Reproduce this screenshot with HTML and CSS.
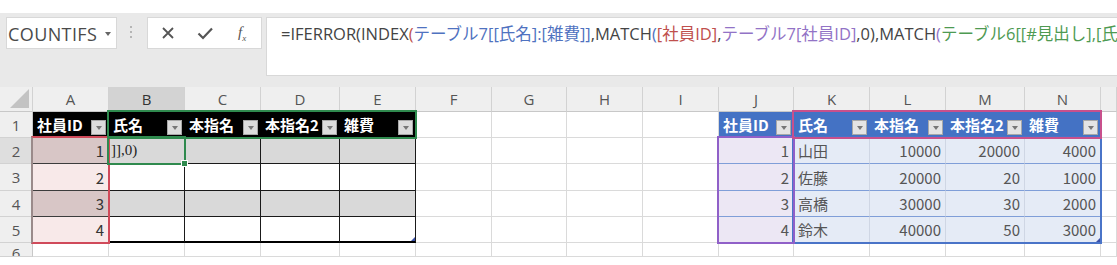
FILE: index.html
```html
<!DOCTYPE html>
<html lang="ja">
<head>
    <meta charset="utf-8">
    <title>テーブル参照</title>
    <link rel="stylesheet" href="styles.css">
</head>
<body>
    <div class="top"></div>
    <div class="toolbar">
        <div class="namebox">COUNTIFS<span class="dd"></span></div>
        <div class="dots"><i></i><i></i><i></i></div>
        <div class="btnbox">
            <svg width="14" height="14" viewBox="0 0 14 14"><path d="M2 2 L12 12 M12 2 L2 12" stroke="#555" stroke-width="1.8" fill="none"/></svg>
            <svg width="16" height="14" viewBox="0 0 16 14"><path d="M1.5 7.5 L6 12 L15 2.5" stroke="#555" stroke-width="2.2" fill="none"/></svg>
            <span class="fx">f<sub>x</sub></span>
        </div>
        <div class="formula">=IFERROR(INDEX<span class="p-red">(</span><span class="f-blue">テーブル7[[氏名]:[雑費]]</span>,MATCH<span class="p-blue">(</span><span class="f-red">[社員ID]</span>,<span class="f-purple">テーブル7[社員ID]</span>,0),MATCH<span class="p-purple">(</span><span class="f-green">テーブル6[[#見出し],[氏名]:[雑費]]</span>,0),"")</div>
    </div>

    <div class="sheet">
        <div class="grid">
            <!-- column headers -->
            <div class="corner"><span class="tri"></span></div>
            <div class="ch">A</div><div class="ch sel">B</div><div class="ch">C</div><div class="ch">D</div><div class="ch">E</div>
            <div class="ch">F</div><div class="ch">G</div><div class="ch">H</div><div class="ch">I</div>
            <div class="ch">J</div><div class="ch">K</div><div class="ch">L</div><div class="ch">M</div><div class="ch">N</div><div class="ch"></div>

            <!-- row 1 -->
            <div class="rh">1</div>
            <div class="c t1h"><span>社員ID</span><b class="fb"></b></div>
            <div class="c t1h"><span>氏名</span><b class="fb"></b></div>
            <div class="c t1h"><span>本指名</span><b class="fb"></b></div>
            <div class="c t1h"><span>本指名2</span><b class="fb"></b></div>
            <div class="c t1h"><span>雑費</span><b class="fb"></b></div>
            <div class="c"></div><div class="c"></div><div class="c"></div><div class="c"></div>
            <div class="c t2h"><span>社員ID</span><b class="fb"></b></div>
            <div class="c t2h"><span>氏名</span><b class="fb"></b></div>
            <div class="c t2h"><span>本指名</span><b class="fb"></b></div>
            <div class="c t2h"><span>本指名2</span><b class="fb"></b></div>
            <div class="c t2h"><span>雑費</span><b class="fb"></b></div>
            <div class="c"></div>

            <!-- row 2 -->
            <div class="rh sel">2</div>
            <div class="c t1a band num">1</div>
            <div class="c t1 band edit">]],0)</div>
            <div class="c t1 band"></div><div class="c t1 band"></div><div class="c t1 band"></div>
            <div class="c"></div><div class="c"></div><div class="c"></div><div class="c"></div>
            <div class="c t2j num">1</div>
            <div class="c t2">山田</div>
            <div class="c t2 num">10000</div><div class="c t2 num">20000</div><div class="c t2 num">4000</div>
            <div class="c"></div>

            <!-- row 3 -->
            <div class="rh">3</div>
            <div class="c t1a num">2</div>
            <div class="c t1"></div><div class="c t1"></div><div class="c t1"></div><div class="c t1"></div>
            <div class="c"></div><div class="c"></div><div class="c"></div><div class="c"></div>
            <div class="c t2j num">2</div>
            <div class="c t2">佐藤</div>
            <div class="c t2 num">20000</div><div class="c t2 num">20</div><div class="c t2 num">1000</div>
            <div class="c"></div>

            <!-- row 4 -->
            <div class="rh">4</div>
            <div class="c t1a band num">3</div>
            <div class="c t1 band"></div><div class="c t1 band"></div><div class="c t1 band"></div><div class="c t1 band"></div>
            <div class="c"></div><div class="c"></div><div class="c"></div><div class="c"></div>
            <div class="c t2j num">3</div>
            <div class="c t2">高橋</div>
            <div class="c t2 num">30000</div><div class="c t2 num">30</div><div class="c t2 num">2000</div>
            <div class="c"></div>

            <!-- row 5 -->
            <div class="rh">5</div>
            <div class="c t1a num">4</div>
            <div class="c t1 last"></div><div class="c t1 last"></div><div class="c t1 last"></div><div class="c t1 last end1"></div>
            <div class="c"></div><div class="c"></div><div class="c"></div><div class="c"></div>
            <div class="c t2j num">4</div>
            <div class="c t2">鈴木</div>
            <div class="c t2 num">40000</div><div class="c t2 num">50</div><div class="c t2 num end2">3000</div>
            <div class="c"></div>

            <!-- row 6 -->
            <div class="rh cut">6</div>
            <div class="c"></div><div class="c"></div><div class="c"></div><div class="c"></div><div class="c"></div>
            <div class="c"></div><div class="c"></div><div class="c"></div><div class="c"></div>
            <div class="c"></div><div class="c"></div><div class="c"></div><div class="c"></div><div class="c"></div>
            <div class="c"></div>
        </div>

        <!-- range highlights drawn over the grid -->
        <div class="rng red-a"></div>
        <div class="rng green-hd"></div>
        <div class="rng active"><span class="handle"></span></div>
        <div class="rng blue-body"></div>
        <div class="rng purple-id"></div>
        <div class="rng pink-hd"></div>
    </div>
</body>
</html>
```

FILE: styles.css
```css
body {
    margin: 0;
    background: #fff;
    font-family: "Noto Sans CJK JP", "Noto Sans", sans-serif;
    overflow: hidden;
}

.top {
    height: 13px;
}

/* formula bar */
.toolbar {
    height: 74px;
    background: #e9e9e9;
    display: flex;
    align-items: flex-start;
    padding: 4px 0 0 6px;
    box-sizing: border-box;
}

.namebox {
    width: 111px;
    height: 32px;
    background: #fff;
    border: 1px solid #d8d8d8;
    box-sizing: border-box;
    display: flex;
    align-items: center;
    padding: 1px 0 0 1px;
    font-family: "Open Sans", "Noto Sans", sans-serif;
    font-size: 18px;
    letter-spacing: 0.4px;
    color: #4a4a4a;
}

.dd {
    margin-left: 8px;
    border-left: 3px solid transparent;
    border-right: 3px solid transparent;
    border-top: 4px solid #666;
}

.dots {
    width: 3px;
    margin: 9px 14px 0 13px;
    display: flex;
    flex-direction: column;
    gap: 3px;
}

.dots i {
    display: block;
    width: 2px;
    height: 2px;
    background: #b5b5b5;
}

.btnbox {
    width: 115px;
    height: 32px;
    background: #fff;
    border: 1px solid #d8d8d8;
    box-sizing: border-box;
    display: flex;
    align-items: center;
    padding-left: 13px;
    gap: 22px;
}

.fx {
    font-family: "Liberation Serif", serif;
    font-style: italic;
    font-size: 15px;
    color: #555;
    margin-left: 3px;
}

.fx sub {
    font-size: 9px;
}

.formula {
    flex: 1;
    margin-left: 4px;
    height: 59px;
    background: #fff;
    border: 1px solid #d8d8d8;
    border-right: none;
    box-sizing: border-box;
    padding: 3px 0 0 14px;
    font-family: "Open Sans", "Noto Sans CJK JP", sans-serif;
    font-size: 16.5px;
    color: #444;
    white-space: nowrap;
    overflow: hidden;
}

.p-red, .f-red { color: #c0504d; }
.p-blue, .f-blue { color: #4f72c0; }
.p-purple, .f-purple { color: #9273c6; }
.f-green { color: #4e9a52; }

/* sheet grid */
.sheet {
    position: relative;
    height: 178px;
}

.grid {
    display: grid;
    grid-template-columns: 33px 76px 76px 76px 79px 76px 76px 75px 76px 76px 75px 76px 76px 79px 76px 1fr;
    grid-template-rows: 25px 26px 26px 27px 26px 26px 14px;
    font-size: 15px;
}

.grid > div {
    box-sizing: border-box;
    border-right: 1px solid #dadada;
    border-bottom: 1px solid #dadada;
    overflow: hidden;
    white-space: nowrap;
}

.corner, .ch, .rh {
    background: #efefef;
    color: #555;
}

.grid > .ch, .grid > .corner {
    border-right-color: #d2d2d2;
    border-bottom-color: #c8c8c8;
    display: flex;
    align-items: center;
    justify-content: center;
    font-family: "Open Sans", "Noto Sans", sans-serif;
    font-size: 15px;
}

.grid > .ch.sel {
    background: #d3d3d3;
    color: #333;
}

.corner {
    position: relative;
}

.tri {
    position: absolute;
    right: 3px;
    bottom: 3px;
    border-left: 19px solid transparent;
    border-bottom: 19px solid #c3c3c3;
}

.grid > .rh {
    border-right-color: #c8c8c8;
    border-bottom-color: #d2d2d2;
    display: flex;
    align-items: center;
    justify-content: center;
    font-family: "Open Sans", "Noto Sans", sans-serif;
    font-size: 15px;
}

.grid > .rh.sel {
    background: #dedede;
}

.grid > .rh.cut {
    align-items: flex-start;
    line-height: 20px;
}

.c {
    padding: 0 4px;
    display: flex;
    align-items: center;
    color: #333;
}

.num {
    justify-content: flex-end;
}

/* left table: black header */
.grid > .t1h {
    background: #000;
    color: #fff;
    font-weight: bold;
    border-color: #000;
    justify-content: space-between;
    align-items: flex-end;
    padding: 0 2px 0 4px;
}

.t1h span, .t2h span {
    line-height: 24px;
}

.fb {
    flex: none;
    width: 15px;
    height: 15px;
    margin-bottom: 2px;
    background: #dcdcdc;
    border: 1px solid #a8a8a8;
    box-sizing: border-box;
    display: flex;
    align-items: center;
    justify-content: center;
}

.fb::after {
    content: "";
    border-left: 3px solid transparent;
    border-right: 3px solid transparent;
    border-top: 4px solid #777;
}

.grid > .t1 {
    border-color: #1a1a1a;
}

.grid > .t1a {
    background: #f8e9e9;
    border-bottom-color: #3c3c3c;
}

.grid > .t1a.band {
    background: #d8c6c6;
}

.grid > .band {
    background: #d9d9d9;
}

.edit {
    font-family: "Liberation Serif", serif;
    padding-left: 2px;
    color: #222;
}

.grid > .last {
    border-bottom: 2px solid #000;
}

.end1, .end2 {
    position: relative;
}

.end1::after, .end2::after {
    content: "";
    position: absolute;
    right: 0;
    bottom: 0;
    border-left: 4px solid transparent;
    border-bottom: 4px solid #3a50a8;
}

/* right table: blue header */
.grid > .t2h {
    background: #4472c4;
    color: #fff;
    font-weight: bold;
    border-color: #4472c4;
    justify-content: space-between;
    align-items: flex-end;
    padding: 0 2px 0 4px;
}

.grid > .t2h .fb {
    background: #e4e4e4;
}

.grid > .t2, .grid > .t2j {
    background: #e5ebf6;
    color: #555;
    border-right-color: #cfd6e4;
    border-bottom-color: #7f9ed8;
}

.grid > .t2j {
    background: #ece7f4;
}

/* reference ranges over the grid */
.rng {
    position: absolute;
    box-sizing: border-box;
    border: 2px solid;
}

.red-a {
    left: 31px;
    top: 49px;
    width: 79px;
    height: 108px;
    border-color: #d04a5a;
    border-left-color: #9a8a8a;
}

.green-hd {
    left: 107px;
    top: 23px;
    width: 310px;
    height: 29px;
    border-color: #2f8a4e;
}

.active {
    left: 107px;
    top: 49px;
    width: 79px;
    height: 29px;
    border-color: #2f8a4e;
}

.handle {
    position: absolute;
    right: -4px;
    bottom: -4px;
    width: 5px;
    height: 5px;
    background: #2f8a4e;
    border: 1px solid #fff;
}

.blue-body {
    left: 792px;
    top: 49px;
    width: 310px;
    height: 108px;
    border-color: #4a74c8;
}

.purple-id {
    left: 717px;
    top: 49px;
    width: 78px;
    height: 108px;
    border-color: #9060c8;
}

.pink-hd {
    left: 792px;
    top: 23px;
    width: 310px;
    height: 29px;
    border-color: #c8508c;
}
```
